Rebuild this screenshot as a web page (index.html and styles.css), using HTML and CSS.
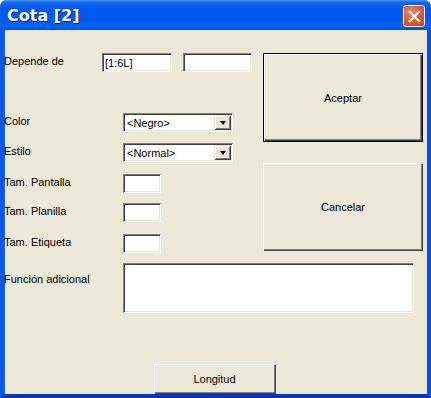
FILE: index.html
```html
<!DOCTYPE html>
<html lang="es">
<head>
    <meta charset="UTF-8">
    <title>Cota [2]</title>
    <link rel="stylesheet" href="styles.css">
</head>
<body>

<div class="window">
    <div class="titlebar">
        <span class="title">Cota [2]</span>
        <span class="close">
            <svg width="13" height="13" viewBox="0 0 13 13"><path d="M2 2 L11 11 M11 2 L2 11" stroke="#fff" stroke-width="2.4" stroke-linecap="square"/></svg>
        </span>
    </div>

    <div class="client">
        <div class="top">
            <div class="fields">
                <div class="row row-dep">
                    <label class="lbl lbl-short">Depende de</label>
                    <input class="edit dep1" type="text" value="[1:6L]">
                    <input class="edit dep2" type="text" value="">
                </div>
                <div class="row row-color">
                    <label class="lbl">Color</label>
                    <div class="combo"><span class="combo-text">&lt;Negro&gt;</span><span class="combo-btn"><i class="arrow"></i></span></div>
                </div>
                <div class="row row-estilo">
                    <label class="lbl">Estilo</label>
                    <div class="combo"><span class="combo-text">&lt;Normal&gt;</span><span class="combo-btn"><i class="arrow"></i></span></div>
                </div>
                <div class="row row-pant">
                    <label class="lbl">Tam. Pantalla</label>
                    <input class="edit small" type="text" value="">
                </div>
                <div class="row row-plan">
                    <label class="lbl">Tam. Planilla</label>
                    <input class="edit small" type="text" value="">
                </div>
                <div class="row row-etiq">
                    <label class="lbl">Tam. Etiqueta</label>
                    <input class="edit small" type="text" value="">
                </div>
            </div>
            <div class="actions">
                <button class="btn btn-default btn-ok">Aceptar</button>
                <button class="btn btn-cancel">Cancelar</button>
            </div>
        </div>

        <div class="row row-func">
            <label class="lbl">Función adicional</label>
            <textarea class="edit memo"></textarea>
        </div>

        <div class="footer">
            <button class="btn btn-long">Longitud</button>
        </div>
    </div>
</div>

</body>
</html>
```

FILE: styles.css
```css
body { margin: 0; background: #fff; font-family: "Liberation Sans", Arial, sans-serif; font-size: 11px; color: #000; }

.window { width: 431px; height: 398px; display: flex; flex-direction: column; border-radius: 7px 7px 0 0; overflow: hidden; background: #0054e3; }

.titlebar { height: 30px; flex: none; display: flex; align-items: center; justify-content: space-between; padding: 0 6px 0 7px;
    background: linear-gradient(to bottom, #4a96f8 0%, #1667ef 8%, #0058ee 30%, #005af0 70%, #0066fa 88%, #004ddc 100%); }
.title { font-family: "DejaVu Sans", sans-serif; font-weight: bold; font-size: 16px; color: #fff; text-shadow: 1px 1px #0a1f8e; margin-top: 1px; }
.close { width: 22px; height: 22px; box-sizing: border-box; border: 1px solid #fff; border-radius: 3px; display: flex; align-items: center; justify-content: center;
    background: radial-gradient(circle at 35% 30%, #f08a6a 0%, #e15a36 45%, #c9401c 100%); margin-top: 2px; }

.client { flex: 1; background: #ece9d8; border-left: 4px solid #0b56e6; border-right: 4px solid #0a50de; border-bottom: 4px solid #0036c0;
    box-shadow: inset 1px 0 #1a68f0; display: flex; flex-direction: column; }

.top { display: flex; padding-top: 23px; }
.fields { width: 259px; }
.actions { width: 160px; display: flex; flex-direction: column; }

.row { display: flex; align-items: flex-start; }
.lbl { width: 119px; flex: none; padding-top: 2px; line-height: 13px; }
.lbl-short { width: 98px; }

.row-color { margin-top: 41px; }
.row-estilo { margin-top: 11px; }
.row-pant { margin-top: 12px; }
.row-plan { margin-top: 10px; }
.row-etiq { margin-top: 12px; }

.edit { box-sizing: border-box; height: 19px; margin: 0; padding: 1px 2px 0; background: #fff; font: inherit; color: #000; outline: none; resize: none;
    border-top: 1px solid #808080; border-left: 1px solid #808080; border-right: 1px solid #fff; border-bottom: 1px solid #fff;
    box-shadow: inset 1px 1px #404040, inset -1px -1px #ece9d8; }
.dep1 { width: 70px; }
.dep2 { width: 69px; margin-left: 11px; }
.small { width: 38px; }
.memo { width: 291px; height: 50px; display: block; }

.combo { box-sizing: border-box; width: 110px; height: 19px; display: flex; align-items: center; background: #fff;
    border-top: 1px solid #808080; border-left: 1px solid #808080; border-right: 1px solid #fff; border-bottom: 1px solid #fff;
    box-shadow: inset 1px 1px #404040, inset -1px -1px #ece9d8; padding: 1px 1px 1px 2px; }
.combo-text { flex: 1; padding-left: 1px; }
.combo-btn { width: 17px; height: 15px; box-sizing: border-box; background: #ece9d8; display: flex; align-items: center; justify-content: center;
    box-shadow: inset 1px 1px #ece9d8, inset -1px -1px #404040, inset 2px 2px #fff, inset -2px -2px #808080; }
.arrow { width: 0; height: 0; margin-top: 1px; border-left: 3.5px solid transparent; border-right: 3.5px solid transparent; border-top: 4px solid #000; }

.btn { box-sizing: border-box; font: inherit; color: #000; background: #ece9d8; padding: 0; margin: 0; cursor: default;
    border: none; box-shadow: inset 1px 1px #fff, inset -1px -1px #404040, inset -2px -2px #808080; }
.btn-ok { height: 89px; }
.btn-default { border: 1px solid #000; box-shadow: inset 1px 1px #fff, inset -1px -1px #404040, inset -2px -2px #808080; }
.btn-cancel { height: 88px; margin-top: 21px; }

.row-func { margin-top: 10px; }
.row-func .lbl { padding-top: 10px; }
.footer { display: flex; justify-content: center; margin-top: 51px; padding-right: 2px; }
.btn-long { width: 122px; height: 30px; }
```
